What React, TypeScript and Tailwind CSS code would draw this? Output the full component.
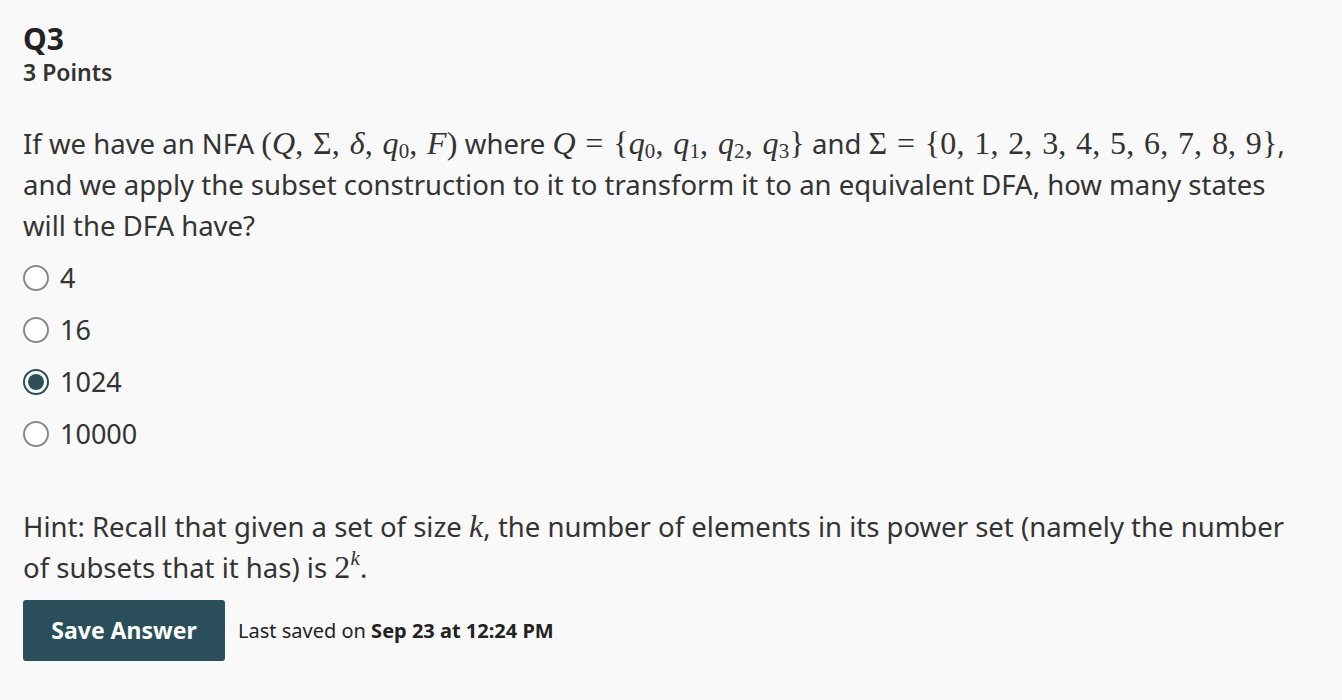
import { useState } from "react";

const M = ({ children }: { children: React.ReactNode }) => (
  <span className="font-['Liberation_Serif','DejaVu_Serif',serif] text-[32px] leading-none tracking-[0.15px] [word-spacing:1.5px] whitespace-nowrap">
    {children}
  </span>
);
const I = ({ children }: { children: React.ReactNode }) => <i className="italic">{children}</i>;
const Sub = ({ children }: { children: React.ReactNode }) => (
  <span className="inline-block align-[-4px] text-[21px] not-italic leading-none">{children}</span>
);

const options = ["4", "16", "1024", "10000"];

export default function App() {
  const [picked, setPicked] = useState("1024");

  return (
    <div className="min-h-[700px] bg-[#f9f9f9] pl-[23px] pr-[45px] pt-[21px] font-['Noto_Sans',sans-serif] text-[#333]">
      <h2 className="text-[30px] font-bold leading-[36px] text-[#222]">Q3</h2>
      <div className="text-[23px] font-semibold leading-[30px] text-[#333]">3 Points</div>

      <p className="mt-[36px] text-[27.5px] leading-[41px] text-[#333]">
        If we have an NFA{" "}
        <M>
          (<I>Q</I>, Σ, <I>δ</I>, <I>q</I>
          <Sub>0</Sub>, <I>F</I>)
        </M>{" "}
        where{" "}
        <M>
          <I>Q</I> = {"{"}
          <I>q</I>
          <Sub>0</Sub>, <I>q</I>
          <Sub>1</Sub>, <I>q</I>
          <Sub>2</Sub>, <I>q</I>
          <Sub>3</Sub>
          {"}"}
        </M>{" "}
        and <M>Σ = {"{"}0, 1, 2, 3, 4, 5, 6, 7, 8, 9{"}"}</M>, and we apply the subset construction to it to
        transform it to an equivalent DFA, how many states will the DFA have?
      </p>

      <div className="mt-[6px] flex flex-col">
        {options.map((o) => (
          <label key={o} className="flex h-[52px] cursor-pointer items-center gap-[11px]">
            <span
              onClick={() => setPicked(o)}
              className={
                picked === o
                  ? "flex h-[26px] w-[26px] items-center justify-center rounded-full border-2 border-[#2a4f5a] bg-white"
                  : "flex h-[26px] w-[26px] items-center justify-center rounded-full border-2 border-[#8a8a8a] bg-white"
              }
            >
              {picked === o && <span className="h-[16px] w-[16px] rounded-full bg-[#2a4f5a]" />}
            </span>
            <span className="text-[27px] text-[#333]">{o}</span>
          </label>
        ))}
      </div>

      <p className="mt-[46px] text-[27.5px] leading-[41px] text-[#333]">
        Hint: Recall that given a set of size{" "}
        <M>
          <I>k</I>
        </M>
        , the number of elements in its power set (namely the number of subsets that it has) is{" "}
        <M>
          2<span className="inline-block align-[13px] text-[21px] italic leading-none">k</span>
        </M>
        .
      </p>

      <div className="mt-[12px] flex items-center gap-[13px]">
        <button className="h-[61px] w-[202px] rounded-[3px] bg-[#2a4f5a] text-[23px] font-bold text-white">
          Save Answer
        </button>
        <span className="text-[20px] text-[#222]">
          Last saved on <b className="font-bold">Sep 23 at 12:24 PM</b>
        </span>
      </div>
    </div>
  );
}
